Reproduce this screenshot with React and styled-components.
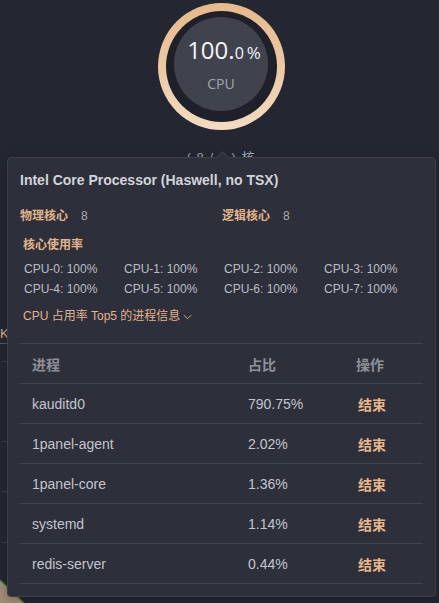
import React from 'react';
import styled, { createGlobalStyle } from 'styled-components';

const GlobalStyle = createGlobalStyle`
  html, body {
    margin: 0;
    padding: 0;
    background: #242631;
    font-family: "Liberation Sans", Arial, "Noto Sans CJK SC", sans-serif;
  }
  #root {
    width: 439px;
    height: 603px;
    overflow: hidden;
  }
`;

const Page = styled.div`
  position: relative;
  width: 439px;
  height: 603px;
  overflow: hidden;
  background: #242631;
  display: flex;
  flex-direction: column;
`;

const GaugeArea = styled.div`
  display: flex;
  flex-direction: column;
  align-items: center;
  padding: 3px 0 0 3px;
`;

const Ring = styled.div`
  width: 127px;
  height: 127px;
  border-radius: 50%;
  background: linear-gradient(180deg, #e6b98c 0%, #eccaa6 55%, #f2dcc4 100%);
  display: flex;
  align-items: center;
  justify-content: center;
`;

const RingGap = styled.div`
  width: 111px;
  height: 111px;
  border-radius: 50%;
  background: #1f2029;
  display: flex;
  align-items: center;
  justify-content: center;
  padding-bottom: 5px;
  box-sizing: border-box;
`;

const Disc = styled.div`
  width: 94px;
  height: 94px;
  border-radius: 50%;
  background: #40424e;
  display: flex;
  flex-direction: column;
  align-items: center;
  justify-content: center;
  font-family: "Open Sans", "Noto Sans", sans-serif;
`;

const Value = styled.div`
  color: #f4f4f6;
  font-size: 24px;
  line-height: 26px;
  margin: 2px 0 0 6px;
  white-space: nowrap;
`;

const Small = styled.span`
  font-size: ${p => p.size}px;
  margin-left: ${p => p.gap || 0}px;
`;

const GaugeLabel = styled.div`
  color: #a3a6b0;
  font-size: 14px;
  margin-top: 8px;
`;

const Cores = styled.div`
  margin-top: 17px;
  color: #9aa6c0;
  font-size: 13px;
  letter-spacing: 1px;
`;

const Below = styled.div`
  display: flex;
  margin-top: 158px;
`;

const SideCard = styled.div`
  width: 200px;
  display: flex;
  flex-direction: column;
`;

const SideHead = styled.div`
  color: #e2b088;
  font-size: 13px;
  height: 19px;
  line-height: 19px;
  border-bottom: 1px solid #555866;
`;

const SideRow = styled.div`
  height: ${p => p.h}px;
  margin-left: 2px;
  width: 6px;
  border-bottom: 1px solid #3d404c;
`;

const Slice = styled.svg`
  position: absolute;
  left: 0;
  bottom: 0;
`;

const Popover = styled.div`
  position: absolute;
  left: 7px;
  top: 157px;
  width: 429px;
  box-sizing: border-box;
  padding: 12px;
  background: #2d2f3b;
  border: 1px solid #3d404c;
  border-radius: 4px;
  box-shadow: 0 2px 10px rgba(0, 0, 0, 0.25);
`;

const Arrow = styled.div`
  position: absolute;
  top: -5px;
  left: 210px;
  width: 8px;
  height: 8px;
  background: #2d2f3b;
  border-left: 1px solid #3d404c;
  border-top: 1px solid #3d404c;
  transform: rotate(45deg);
`;

const Title = styled.div`
  color: #d2d4da;
  font-size: 14px;
  font-weight: bold;
  line-height: 20px;
`;

const InfoRow = styled.div`
  display: grid;
  grid-template-columns: 202px 1fr;
  margin-top: 16px;
  line-height: 20px;
`;

const Info = styled.div`
  display: flex;
  gap: 13px;
  font-size: 12px;
`;

const Label = styled.span`
  color: #e2b48c;
  font-weight: bold;
`;

const Num = styled.span`
  color: #a9abb3;
`;

const Section = styled.div`
  color: #e2b48c;
  font-weight: bold;
  font-size: 12px;
  line-height: 20px;
  margin: ${p => p.mt}px 0 0 3px;
`;

const CoreGrid = styled.div`
  display: grid;
  grid-template-columns: repeat(4, 100px);
  margin: 4px 0 0 4px;
  font-size: 12px;
  line-height: 20px;
  color: #bcbec6;
`;

const Toggle = styled.div`
  display: flex;
  align-items: center;
  gap: 2px;
  color: #e2b48c;
  font-size: 12px;
  line-height: 20px;
  margin: 7px 0 0 3px;
`;

const Table = styled.div`
  margin-top: 17px;
  border-top: 1px solid #41434f;
`;

const Row = styled.div`
  display: grid;
  grid-template-columns: 216px 108px 1fr;
  height: 40px;
  align-items: center;
  border-bottom: 1px solid #41434f;
  box-sizing: border-box;
  font-size: 14px;
  color: ${p => (p.head ? '#8e909a' : '#c3c5cc')};
  font-weight: ${p => (p.head ? 'bold' : 'normal')};
`;

const Cell = styled.div`
  padding-left: 12px;
`;

const Kill = styled.span`
  color: #e6b48a;
  font-weight: bold;
  margin-left: 2px;
`;

const cores = [0, 1, 2, 3, 4, 5, 6, 7];

const procs = [
  ['kauditd0', '790.75%'],
  ['1panel-agent', '2.02%'],
  ['1panel-core', '1.36%'],
  ['systemd', '1.14%'],
  ['redis-server', '0.44%'],
];

export default function App() {
  return (
    <Page>
      <GlobalStyle />
      <GaugeArea>
        <Ring>
          <RingGap>
            <Disc>
              <Value>
                100.<Small size={16}>0</Small>
                <Small size={17} gap={3}>%</Small>
              </Value>
              <GaugeLabel>CPU</GaugeLabel>
            </Disc>
          </RingGap>
        </Ring>
        <Cores>( 8 / 0 ) 核</Cores>
      </GaugeArea>

      <Below>
        <SideCard>
          <SideHead>KB</SideHead>
          <SideRow h={17} />
          <SideRow h={79} />
          <SideRow h={49} />
          <SideRow h={50} />
        </SideCard>
      </Below>

      <Slice width="30" height="26" viewBox="0 0 30 26">
        <polygon points="0,3 0,26 24,26" fill="#a08c76" />
        <line x1="0" y1="3" x2="24" y2="26" stroke="#3f7a44" strokeWidth="1.5" />
      </Slice>

      <Popover>
        <Arrow />
        <Title>Intel Core Processor (Haswell, no TSX)</Title>
        <InfoRow>
          <Info>
            <Label>物理核心</Label>
            <Num>8</Num>
          </Info>
          <Info>
            <Label>逻辑核心</Label>
            <Num>8</Num>
          </Info>
        </InfoRow>
        <Section mt={9}>核心使用率</Section>
        <CoreGrid>
          {cores.map(i => (
            <div key={i}>CPU-{i}: 100%</div>
          ))}
        </CoreGrid>
        <Toggle>
          CPU 占用率 Top5 的进程信息
          <svg width="11" height="11" viewBox="0 0 12 12">
            <path d="M2 4.5 L6 8.5 L10 4.5" fill="none" stroke="#e2b48c" strokeWidth="1" />
          </svg>
        </Toggle>
        <Table>
          <Row head>
            <Cell>进程</Cell>
            <Cell>占比</Cell>
            <Cell>操作</Cell>
          </Row>
          {procs.map(([name, pct]) => (
            <Row key={name}>
              <Cell>{name}</Cell>
              <Cell>{pct}</Cell>
              <Cell>
                <Kill>结束</Kill>
              </Cell>
            </Row>
          ))}
        </Table>
      </Popover>
    </Page>
  );
}
